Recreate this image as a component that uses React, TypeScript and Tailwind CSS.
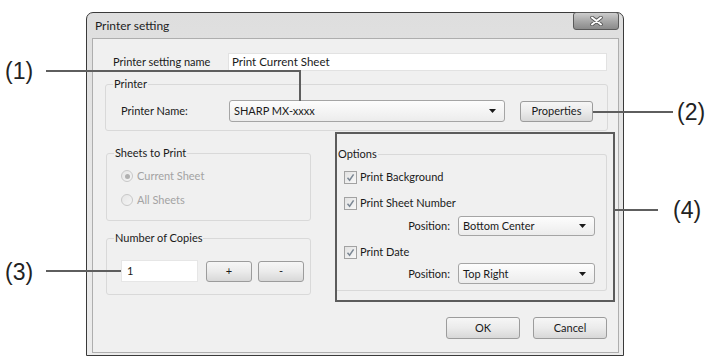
import React from "react";

const Check = () => (
  <span className="w-[13px] h-[13px] border border-[#a2a2a2] bg-gradient-to-br from-[#e2e2e2] to-[#f8f8f8] flex items-center justify-center shrink-0">
    <svg width="9" height="9" viewBox="0 0 9 9">
      <path d="M1.5 4.8 L3.6 7.2 L7.6 1.4" stroke="#7b8794" strokeWidth="1.5" fill="none" />
    </svg>
  </span>
);

const Radio = ({ on }: { on?: boolean }) => (
  <span className="w-[12px] h-[12px] rounded-full border border-[#c8c8c8] bg-gradient-to-br from-[#e6e6e6] to-[#f4f4f4] flex items-center justify-center shrink-0">
    {on && <span className="w-[5px] h-[5px] rounded-full bg-[#b0b0b0]" />}
  </span>
);

const Arrow = () => (
  <svg width="7" height="4" viewBox="0 0 7 4">
    <path d="M0 0 L7 0 L3.5 4 Z" fill="#1a1a1a" />
  </svg>
);

const Btn = ({ label, w, h = 22 }: { label: string; w: string; h?: number }) => (
  <div
    className={`${w} ${h === 22 ? "h-[22px]" : "h-[21px]"} border border-[#9c9c9c] rounded-[3px] bg-gradient-to-b from-[#f6f6f6] via-[#ebebeb] to-[#d8d8d8] flex items-center justify-center text-[#1a1a1a] shrink-0`}
  >
    {label}
  </div>
);

const Select = ({ value, w, h }: { value: string; w: string; h: string }) => (
  <div className={`${w} ${h} border border-[#a5a5a5] rounded-[3px] bg-gradient-to-b from-[#fdfdfd] to-[#ececec] flex items-center justify-between pl-[4px] pr-[8px] shrink-0`}>
    <span>{value}</span>
    <Arrow />
  </div>
);

export default function App() {
  return (
    <div className="relative w-[712px] h-[357px] bg-white overflow-hidden font-['Lato',sans-serif] text-[11px] leading-[14px] text-[#1a1a1a]">
      <div className="ml-[86px] pt-[12px]">
        <div className="w-[538px] h-[344px] border border-[#3a3a3a] rounded-t-[7px] bg-gradient-to-b from-[#dedede] via-[#e8e8e8] to-[#ececec] flex flex-col">
          {/* title bar */}
          <div className="relative h-[25px] flex items-center pl-[8px] text-[12px] text-[#1e1e1e]">
            Printer setting
            <div className="absolute right-[4px] top-[-1px] w-[46px] h-[18px] border border-[#5a5a5a] rounded-[3px] bg-gradient-to-b from-[#cdcdcd] via-[#a8a8a8] to-[#8a8a8a] flex items-center justify-center">
              <svg width="13" height="10" viewBox="0 0 13 10">
                <path d="M2 1.5 L11 8.5 M11 1.5 L2 8.5" stroke="#555" strokeWidth="3.6" strokeLinecap="round" />
                <path d="M2 1.5 L11 8.5 M11 1.5 L2 8.5" stroke="#fff" strokeWidth="2" strokeLinecap="round" />
              </svg>
            </div>
          </div>
          {/* content */}
          <div className="ml-[5px] mr-[4px] mb-[2px] flex-1 border border-[#aeaeae] bg-[#f0f0f0] flex flex-col">
            <div className="mt-[14px] flex items-center pl-[20px]">
              <span className="w-[115px] shrink-0">Printer setting name</span>
              <div className="w-[379px] h-[18px] bg-white border border-[#e2e2e2] flex items-center pl-[3px] text-[11.5px]">
                Print Current Sheet
              </div>
            </div>

            <fieldset className="mt-[6px] ml-[12px] w-[503px] border border-[#d9d9d9] rounded-[3px] pl-[15px] pr-[14px] pb-[8px]">
              <legend className="ml-[-8px] px-[1px]">Printer</legend>
              <div className="mt-[9px] flex items-center">
                <span className="w-[108px] shrink-0">Printer Name:</span>
                <Select value="SHARP MX-xxxx" w="w-[276px]" h="h-[22px]" />
                <div className="ml-[15px]">
                  <Btn label="Properties" w="w-[73px]" h={21} />
                </div>
              </div>
            </fieldset>

            <div className="mt-[1px] ml-[12px] flex">
              <div className="ml-[1px] w-[205px] flex flex-col">
                <fieldset className="mt-[14px] border border-[#d9d9d9] rounded-[3px] pl-[14px] pb-[13px] text-[#a3a3a3]">
                  <legend className="ml-[-7px] px-[1px] text-[#1a1a1a]">Sheets to Print</legend>
                  <div className="mt-[9px] flex items-center gap-[4px] h-[14px]">
                    <Radio on />
                    <span>Current Sheet</span>
                  </div>
                  <div className="mt-[10px] flex items-center gap-[4px] h-[14px]">
                    <Radio />
                    <span>All Sheets</span>
                  </div>
                </fieldset>
                <fieldset className="mt-[10px] border border-[#d9d9d9] rounded-[3px] pl-[14px] pb-[12px]">
                  <legend className="ml-[-7px] px-[1px]">Number of Copies</legend>
                  <div className="mt-[15px] flex items-center">
                    <div className="w-[77px] h-[22px] bg-white border border-[#e6e6e6] flex items-center pl-[5px]">1</div>
                    <div className="ml-[8px]">
                      <Btn label="+" w="w-[46px]" h={21} />
                    </div>
                    <div className="ml-[6px]">
                      <Btn label="-" w="w-[46px]" h={21} />
                    </div>
                  </div>
                </fieldset>
              </div>

              <div className="ml-[24px] w-[280px] h-[170px] border-2 border-[#5c5c5c] pr-[6px]">
                <fieldset className="mt-[13px] border border-[#d9d9d9] border-l-0 rounded-r-[3px] pl-[7px] pr-[11px] pb-[6px]">
                  <legend className="ml-[-7px] px-[1px]">Options</legend>
                  <div className="mt-[9px] flex items-center gap-[3px] h-[14px]">
                    <Check />
                    <span>Print Background</span>
                  </div>
                  <div className="mt-[12px] flex items-center gap-[3px] h-[14px]">
                    <Check />
                    <span>Print Sheet Number</span>
                  </div>
                  <div className="mt-[6px] flex items-center justify-end gap-[8px]">
                    <span>Position:</span>
                    <Select value="Bottom Center" w="w-[137px]" h="h-[20px]" />
                  </div>
                  <div className="mt-[9px] flex items-center gap-[3px] h-[14px]">
                    <Check />
                    <span>Print Date</span>
                  </div>
                  <div className="mt-[4px] flex items-center justify-end gap-[8px]">
                    <span>Position:</span>
                    <Select value="Top Right" w="w-[137px]" h="h-[21px]" />
                  </div>
                </fieldset>
              </div>
            </div>

            <div className="mt-[15px] flex justify-end pr-[11px] gap-[13px]">
              <Btn label="OK" w="w-[74px]" />
              <Btn label="Cancel" w="w-[74px]" />
            </div>
          </div>
        </div>
      </div>

      {/* annotations */}
      <div className="absolute left-[46px] top-[70px] w-[255px] h-[2px] bg-[#5e5e5e]" />
      <div className="absolute left-[299px] top-[70px] w-[2px] h-[31px] bg-[#5e5e5e]" />
      <div className="absolute left-[5px] top-[58px] font-['Liberation_Sans',Arial,sans-serif] text-[23px] leading-[26px] text-[#222]">(1)</div>

      <div className="absolute left-[593px] top-[111px] w-[80px] h-[2px] bg-[#5e5e5e]" />
      <div className="absolute left-[677px] top-[99px] font-['Liberation_Sans',Arial,sans-serif] text-[23px] leading-[26px] text-[#222]">(2)</div>

      <div className="absolute left-[46px] top-[270px] w-[75px] h-[2px] bg-[#5e5e5e]" />
      <div className="absolute left-[5px] top-[259px] font-['Liberation_Sans',Arial,sans-serif] text-[23px] leading-[26px] text-[#222]">(3)</div>

      <div className="absolute left-[614px] top-[209px] w-[44px] h-[2px] bg-[#5e5e5e]" />
      <div className="absolute left-[673px] top-[197px] font-['Liberation_Sans',Arial,sans-serif] text-[23px] leading-[26px] text-[#222]">(4)</div>
    </div>
  );
}
